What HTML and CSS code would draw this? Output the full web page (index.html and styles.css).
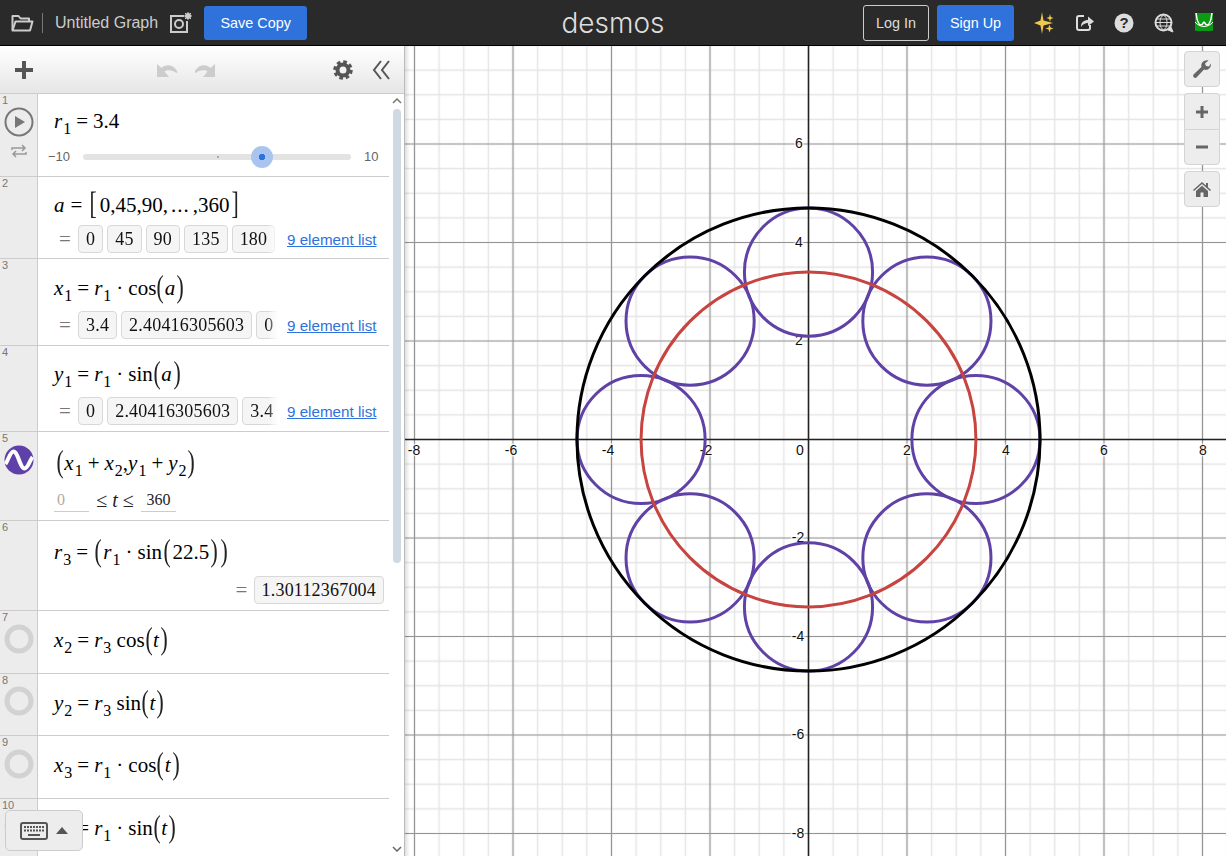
FILE: index.html
```html
<!DOCTYPE html>
<html lang="en">
<head>
    <meta charset="UTF-8">
    <title>Desmos | Graphing Calculator</title>
    <link rel="stylesheet" href="styles.css">
</head>
<body>
    <header class="topbar">
        <div class="topbar-left">
            <svg class="icon-folder" width="24" height="18" viewBox="0 0 24 18" fill="none" stroke="#ccc" stroke-width="2" stroke-linejoin="round"><path d="M2.5 16 V2 H8.5 L10.5 4.5 H19 V7.5"/><path d="M2.5 16.5 L5.5 7.5 H22.5 L20 16.5 Z"/></svg>
            <span class="topbar-divider"></span>
            <span class="graph-title">Untitled Graph</span>
            <svg class="icon-camera" width="24" height="22" viewBox="0 0 24 22" fill="none" stroke="#ccc" stroke-width="2"><path d="M15 4 H2 V20 H18 V9"/><circle cx="10" cy="12" r="4"/><circle cx="19" cy="4" r="3" fill="#ccc" stroke="none"/><path d="M19 0 V8 M15 4 H23 M16 1 L22 7 M22 1 L16 7" stroke-width="1"/></svg>
            <button class="btn-primary btn-save">Save Copy</button>
        </div>
        <div class="logo">desmos</div>
        <div class="topbar-right">
            <button class="btn-outline">Log In</button>
            <button class="btn-primary btn-signup">Sign Up</button>
            <svg class="top-icon icon-spark" width="22" height="24" viewBox="0 0 22 24" fill="#f0c74a"><path d="M9 1 L10.5 9.5 L20 12 L10.5 14.5 L9 23 L7.5 14.5 L1 12 L7.5 9.5 Z"/><path d="M17 3 L17.8 6 L20.5 7 L17.8 8 L17 11 L16.2 8 L13.5 7 L16.2 6 Z"/><path d="M16.5 13.5 L17.5 16.5 L20.5 17.5 L17.5 18.5 L16.5 21.5 L15.5 18.5 L12.5 17.5 L15.5 16.5 Z"/></svg>
            <svg class="top-icon icon-share" width="20" height="18" viewBox="0 0 20 18" fill="none" stroke="#ddd" stroke-width="2"><path d="M9 2 H4 Q2 2 2 4 V14 Q2 16 4 16 H13 Q15 16 15 14 V11"/><path d="M6 13 C6 8 9 6 13 6 V2.5 L19 7.500 L13 12 V9 C10 9 8 10 6 13 Z" fill="#ddd" stroke="none"/></svg>
            <svg class="top-icon icon-help" width="20" height="20" viewBox="0 0 20 20"><circle cx="10" cy="10" r="9.500" fill="#ddd"/><text x="10" y="15" text-anchor="middle" class="help-mark">?</text></svg>
            <svg class="top-icon icon-globe" width="20" height="20" viewBox="0 0 20 20" fill="none" stroke="#ddd"><circle cx="9.500" cy="9.500" r="8" stroke-width="2"/><path d="M19 19 L14 17 L17 14 Z" fill="#ddd"/><ellipse cx="9.500" cy="9.500" rx="3.500" ry="7"/><path d="M2 9.500 H17 M3 6 H16 M3 13 H16"/></svg>
            <svg class="top-icon icon-avatar" width="18" height="18" viewBox="0 0 18 18" fill="none"><rect width="18" height="18" rx="1" fill="#0b9a14"/><path d="M1 0 C2 8 4 12 6 12 C8 12 8 9 9 9 C10 9 10 12 12 12 C14 12 16 8 17 0" stroke="#fff" stroke-width="1.500"/><path d="M0 9 C5 15 13 15 18 9" stroke="#fff"/></svg>
        </div>
    </header>

    <main class="workspace">
        <section class="panel">
            <div class="panel-header">
                <svg class="icon-add" width="18" height="18" viewBox="0 0 18 18"><path d="M7 0 H11 V7 H18 V11 H11 V18 H7 V11 H0 V7 H7 Z" fill="#555"/></svg>
                <div class="history">
                    <svg width="22" height="16" viewBox="0 0 22 16"><path d="M1 15 V2 L5.500 6 C10 2 17 2 21.500 10 L20.500 11 C16 7.500 11 7.500 8.500 9.500 L13 15 Z" fill="#ccc"/></svg>
                    <svg width="22" height="16" viewBox="0 0 22 16"><path d="M21 15 V2 L16.500 6 C12 2 5 2 .5 10 L1.500 11 C6 7.500 11 7.500 13.500 9.500 L9 15 Z" fill="#ccc"/></svg>
                </div>
                <svg class="icon-gear" width="20" height="20" viewBox="0 0 20 20" fill="none" stroke="#555"><circle cx="10" cy="10" r="5.500" stroke-width="4"/><circle cx="10" cy="10" r="8" stroke-width="3.500" stroke-dasharray="3.500 2.780"/></svg>
                <svg class="icon-collapse" width="18" height="20" viewBox="0 0 18 20" fill="none" stroke="#555" stroke-width="2"><path d="M9 1 L2 10 L9 19"/><path d="M17 1 L10 10 L17 19"/></svg>
            </div>
            <div class="panel-body">
                <div class="expr-list">
                    <div class="expr row-1">
                        <div class="gutter">
                            <span class="index">1</span>
                            <svg class="gutter-icon" width="30" height="30" viewBox="0 0 30 30"><circle cx="15" cy="15" r="13.500" fill="none" stroke="#777" stroke-width="2"/><path d="M11 9 L21 15 L11 21 Z" fill="#777"/></svg>
                            <svg class="icon-loop" width="16" height="14" viewBox="0 0 16 14" fill="none" stroke="#999" stroke-width="1.500"><path d="M1 6 V4 H13 M11 1 L14 4 L11 7"/><path d="M15 8 V10 H3 M5 7 L2 10 L5 13"/></svg>
                        </div>
                        <div class="expr-body">
                            <div class="math"><i>r</i><sub>1</sub><span class="op">=</span>3.4</div>
                            <div class="slider">
                                <span class="slider-min">−10</span>
                                <div class="track"><span class="track-tick"></span><span class="thumb"></span></div>
                                <span class="slider-max">10</span>
                            </div>
                        </div>
                    </div>

                    <div class="expr row-2">
                        <div class="gutter"><span class="index">2</span></div>
                        <div class="expr-body">
                            <div class="math"><i>a</i><span class="op">=</span><span class="paren bracket">[</span>0,45,90,<span class="dots">...</span>,360<span class="paren bracket">]</span></div>
                            <div class="values">
                                <span class="equals">=</span>
                                <div class="chips">
                                    <span class="chip">0</span><span class="chip">45</span><span class="chip">90</span><span class="chip">135</span><span class="chip">180</span>
                                </div>
                                <a class="list-link">9 element list</a>
                            </div>
                        </div>
                    </div>

                    <div class="expr row-3">
                        <div class="gutter"><span class="index">3</span></div>
                        <div class="expr-body">
                            <div class="math"><i>x</i><sub>1</sub><span class="op">=</span><i>r</i><sub>1</sub><span class="op">·</span>cos<span class="paren">(</span><i>a</i><span class="paren">)</span></div>
                            <div class="values">
                                <span class="equals">=</span>
                                <div class="chips">
                                    <span class="chip">3.4</span><span class="chip">2.40416305603</span><span class="chip">0</span>
                                </div>
                                <a class="list-link">9 element list</a>
                            </div>
                        </div>
                    </div>

                    <div class="expr row-4">
                        <div class="gutter"><span class="index">4</span></div>
                        <div class="expr-body">
                            <div class="math"><i>y</i><sub>1</sub><span class="op">=</span><i>r</i><sub>1</sub><span class="op">·</span>sin<span class="paren">(</span><i>a</i><span class="paren">)</span></div>
                            <div class="values">
                                <span class="equals">=</span>
                                <div class="chips">
                                    <span class="chip">0</span><span class="chip">2.40416305603</span><span class="chip">3.4</span>
                                </div>
                                <a class="list-link">9 element list</a>
                            </div>
                        </div>
                    </div>

                    <div class="expr row-5">
                        <div class="gutter">
                            <span class="index">5</span>
                            <svg class="gutter-icon" width="30" height="30" viewBox="0 0 30 30"><circle cx="15" cy="15" r="14.500" fill="#5f3fa8"/><path d="M1.500 19 C4 16 6 6.500 9.500 6.500 C14 6.500 16 23.500 20.500 23.500 C24 23.500 26 15 28.500 12" fill="none" stroke="#fff" stroke-width="4"/></svg>
                        </div>
                        <div class="expr-body">
                            <div class="math math-indent"><span class="paren">(</span><i>x</i><sub>1</sub><span class="op">+</span><i>x</i><sub>2</sub>,<i>y</i><sub>1</sub><span class="op">+</span><i>y</i><sub>2</sub><span class="paren">)</span></div>
                            <div class="domain">
                                <span class="domain-input domain-empty">0</span>
                                <span class="domain-label">≤ <i>t</i> ≤</span>
                                <span class="domain-input">360</span>
                            </div>
                        </div>
                    </div>

                    <div class="expr row-6">
                        <div class="gutter"><span class="index">6</span></div>
                        <div class="expr-body">
                            <div class="math"><i>r</i><sub>3</sub><span class="op">=</span><span class="paren">(</span><i>r</i><sub>1</sub><span class="op">·</span>sin<span class="paren">(</span>22.5<span class="paren">)</span><span class="paren">)</span></div>
                            <div class="values values-right">
                                <span class="equals">=</span>
                                <span class="chip">1.30112367004</span>
                            </div>
                        </div>
                    </div>

                    <div class="expr row-short">
                        <div class="gutter">
                            <span class="index">7</span>
                            <svg class="gutter-icon" width="30" height="30" viewBox="0 0 30 30"><circle cx="15" cy="15" r="12" fill="none" stroke="#d2d2d2" stroke-width="5"/></svg>
                        </div>
                        <div class="expr-body">
                            <div class="math"><i>x</i><sub>2</sub><span class="op">=</span><i>r</i><sub>3</sub> cos<span class="paren">(</span><i>t</i><span class="paren">)</span></div>
                        </div>
                    </div>

                    <div class="expr row-short">
                        <div class="gutter">
                            <span class="index">8</span>
                            <svg class="gutter-icon" width="30" height="30" viewBox="0 0 30 30"><circle cx="15" cy="15" r="12" fill="none" stroke="#d2d2d2" stroke-width="5"/></svg>
                        </div>
                        <div class="expr-body">
                            <div class="math"><i>y</i><sub>2</sub><span class="op">=</span><i>r</i><sub>3</sub> sin<span class="paren">(</span><i>t</i><span class="paren">)</span></div>
                        </div>
                    </div>

                    <div class="expr row-short">
                        <div class="gutter">
                            <span class="index">9</span>
                            <svg class="gutter-icon" width="30" height="30" viewBox="0 0 30 30"><circle cx="15" cy="15" r="12" fill="none" stroke="#d2d2d2" stroke-width="5"/></svg>
                        </div>
                        <div class="expr-body">
                            <div class="math"><i>x</i><sub>3</sub><span class="op">=</span><i>r</i><sub>1</sub><span class="op">·</span>cos<span class="paren">(</span><i>t</i><span class="paren">)</span></div>
                        </div>
                    </div>

                    <div class="expr row-short">
                        <div class="gutter">
                            <span class="index">10</span>
                            <svg class="gutter-icon" width="30" height="30" viewBox="0 0 30 30"><circle cx="15" cy="15" r="12" fill="none" stroke="#d2d2d2" stroke-width="5"/></svg>
                        </div>
                        <div class="expr-body">
                            <div class="math"><i>y</i><sub>3</sub><span class="op">=</span><i>r</i><sub>1</sub><span class="op">·</span>sin<span class="paren">(</span><i>t</i><span class="paren">)</span></div>
                        </div>
                    </div>
                </div>
                <div class="scrollbar">
                    <svg width="10" height="6" viewBox="0 0 10 6" fill="none" stroke="#777" stroke-width="1.500"><path d="M1 5 L5 1 L9 5"/></svg>
                    <span class="scroll-thumb"></span>
                    <svg class="scroll-down" width="10" height="6" viewBox="0 0 10 6" fill="none" stroke="#666" stroke-width="1.500"><path d="M1 1 L5 5 L9 1"/></svg>
                </div>
                <button class="keyboard-toggle">
                    <svg width="28" height="18" viewBox="0 0 28 18"><rect x="1" y="1" width="26" height="16" rx="2" fill="none" stroke="#555" stroke-width="2"/><path d="M4 5 H24 M4 8.500 H24" stroke="#555" stroke-width="2" stroke-dasharray="2 1"/><path d="M8 13 H20" stroke="#555" stroke-width="2"/></svg>
                    <svg width="12" height="7" viewBox="0 0 12 7"><path d="M0 7 L6 0 L12 7 Z" fill="#555"/></svg>
                </button>
            </div>
        </section>

        <section class="graph">
            <svg class="graph-canvas" viewBox="405 46 821 810">
                <defs>
                    <pattern id="minorGrid" patternUnits="userSpaceOnUse" x="796.1875" y="427.1875" width="24.625" height="24.625">
                        <path d="M12.3125 0 V24.625 M0 12.3125 H24.625" stroke="#000" stroke-opacity=".1" stroke-width="1.400"/>
                    </pattern>
                    <pattern id="majorGrid" patternUnits="userSpaceOnUse" x="759.25" y="390.25" width="98.5" height="98.5">
                        <path d="M49.25 0 V98.5 M0 49.25 H98.5" stroke="#000" stroke-opacity=".35" stroke-width="1.200"/>
                    </pattern>
                </defs>
                <rect x="405" y="46" width="821" height="810" fill="#fff"/>
                <rect x="405" y="46" width="821" height="810" fill="url(#minorGrid)"/>
                <rect x="405" y="46" width="821" height="810" fill="url(#majorGrid)"/>
                <path class="axis" d="M808.5 46 V856 M405 439.500 H1226"/>
                <g class="tick-labels">
                    <text x="414" y="455">-8</text>
                    <text x="511" y="455">-6</text>
                    <text x="608" y="455">-4</text>
                    <text x="706" y="455">-2</text>
                    <text x="907" y="455">2</text>
                    <text x="1006" y="455">4</text>
                    <text x="1104" y="455">6</text>
                    <text x="1203" y="455">8</text>
                    <text x="800" y="455">0</text>
                    <text x="799" y="148">6</text>
                    <text x="799" y="247">4</text>
                    <text x="799" y="345">2</text>
                    <text x="798" y="542">-2</text>
                    <text x="798" y="641">-4</text>
                    <text x="798" y="739">-6</text>
                    <text x="798" y="838">-8</text>
                </g>
                <g class="curve curve-purple">
                    <circle cx="975.95" cy="439.5" r="64.08"/>
                    <circle cx="926.9" cy="321.1" r="64.08"/>
                    <circle cx="808.5" cy="272.05" r="64.08"/>
                    <circle cx="690.1" cy="321.1" r="64.08"/>
                    <circle cx="641.05" cy="439.5" r="64.08"/>
                    <circle cx="690.1" cy="557.9" r="64.08"/>
                    <circle cx="808.5" cy="606.95" r="64.08"/>
                    <circle cx="926.9" cy="557.9" r="64.08"/>
                </g>
                <circle class="curve curve-red" cx="808.5" cy="439.5" r="167.45"/>
                <circle class="curve curve-black" cx="808.5" cy="439.5" r="231.53"/>
            </svg>
            <span class="graph-shadow"></span>
            <div class="graph-controls">
                <button class="ctl">
                    <svg width="20" height="20" viewBox="0 0 20 20"><path d="M1.500 15.500 L9.500 8 C8.500 4 12 .5 16.500 1.500 L13 4.500 L14 7 L17 7.500 L19 4.500 C19.500 9 15.500 12 12 10.500 L4.500 18.500 Q3 19.500 1.500 18 Q.8 16.500 1.500 15.500 Z" fill="#666"/></svg>
                </button>
                <div class="ctl-group">
                    <button class="ctl ctl-top">
                        <svg width="14" height="14" viewBox="0 0 14 14"><path d="M5.500 1 H8.500 V5.500 H13 V8.500 H8.500 V13 H5.500 V8.500 H1 V5.500 H5.500 Z" fill="#666"/></svg>
                    </button>
                    <button class="ctl ctl-bottom">
                        <svg width="14" height="14" viewBox="0 0 14 14"><rect x="1" y="5.500" width="12" height="3" fill="#666"/></svg>
                    </button>
                </div>
                <button class="ctl">
                    <svg width="18" height="16" viewBox="0 0 18 16"><path d="M9 1 L13 4.500 V2 H15 V6.300 L18 9 L17 10 L9 3 L1 10 L0 9 Z M3 10 L9 4.800 L15 10 V16 H10.500 V11.500 H7.500 V16 H3 Z" fill="#666"/></svg>
                </button>
            </div>
        </section>
    </main>
</body>
</html>
```

FILE: styles.css
```css
* {
    box-sizing: border-box;
}

html, body {
    height: 100%;
}

body {
    margin: 0;
    overflow: hidden;
    display: flex;
    flex-direction: column;
    font-family: "Liberation Sans", Arial, sans-serif;
    background: #fff;
}

button {
    font-family: inherit;
    cursor: pointer;
}

svg {
    flex: none;
}

/* Top bar */
.topbar {
    height: 46px;
    flex: none;
    display: grid;
    grid-template-columns: 1fr auto 1fr;
    align-items: center;
    background: #2a2a2a;
    border-bottom: 1px solid #000;
}

.topbar-left,
.topbar-right {
    display: flex;
    align-items: center;
}

.topbar-left {
    padding-left: 10px;
}

.topbar-right {
    justify-content: flex-end;
}

.topbar-divider {
    width: 1px;
    height: 20px;
    margin: 0 12px 0 8px;
    background: #777;
}

.graph-title {
    font-size: 16px;
    color: #ccc;
}

.icon-camera {
    margin-left: 11px;
}

.btn-primary,
.btn-outline {
    height: 36px;
    font-size: 14.4px;
    border-radius: 3px;
}

.btn-primary {
    color: #fff;
    background: #2f72dc;
    border: none;
}

.btn-save {
    width: 103px;
    height: 34px;
    margin-left: 11px;
}

.btn-outline {
    width: 66px;
    color: #ddd;
    background: transparent;
    border: 1px solid #ccc;
}

.btn-signup {
    width: 77px;
    margin-left: 8px;
}

.logo {
    font-family: Inter, Lato, sans-serif;
    font-weight: 300;
    font-size: 28px;
    line-height: 44px;
    color: #ddd;
}

.icon-spark {
    margin-left: 19px;
}

.icon-share {
    margin-left: 20px;
}

.icon-help {
    margin-left: 19px;
}

.icon-globe {
    margin-left: 20px;
}

.icon-avatar {
    margin: -2px 13px 0 21px;
}

.help-mark {
    font-size: 15px;
    font-weight: bold;
    fill: #2a2a2a;
}

/* Layout below the bar */
.workspace {
    flex: 1;
    min-height: 0;
    display: flex;
}

.panel {
    width: 405px;
    flex: none;
    display: flex;
    flex-direction: column;
    border-right: 1px solid #bbb;
}

.panel-header {
    height: 48px;
    flex: none;
    display: flex;
    align-items: center;
    padding-left: 15px;
    background: linear-gradient(#fff, #e6e6e6);
    border-bottom: 1px solid #ccc;
}

.history {
    display: flex;
    gap: 16px;
    margin-left: 123px;
}

.icon-gear {
    margin-left: 117px;
}

.icon-collapse {
    margin-left: 19px;
}

.panel-body {
    position: relative;
    flex: 1;
    min-height: 0;
    display: flex;
}

/* Expression list */
.expr-list {
    width: 389px;
    flex: none;
    overflow: hidden;
    background: linear-gradient(90deg, #ececec 37px, #fff 37px);
}

.expr {
    position: relative;
    display: flex;
    border-bottom: 1px solid #ccc;
}

.row-1 { height: 83px; }
.row-2 { height: 82px; }
.row-3 { height: 87px; }
.row-4 { height: 86px; }
.row-5 { height: 89px; }
.row-6 { height: 90px; }
.row-short { height: 62.5px; }

.gutter {
    width: 38px;
    flex: none;
    display: flex;
    flex-direction: column;
    background: #ececec;
    border-right: 1px solid #ccc;
}

.index {
    height: 12.5px;
    padding-left: 2px;
    font-size: 11px;
    line-height: 12px;
    color: #777;
}

.gutter-icon {
    margin-left: 3.5px;
}

.icon-loop {
    margin: 7px 0 0 11px;
}

.expr-body {
    flex: 1;
    min-width: 0;
    padding: 8px 0 0 16px;
}

.row-1 .expr-body { padding-top: 7px; }
.row-3 .expr-body,
.row-short .expr-body { padding-top: 9px; }
.row-5 .expr-body { padding-top: 7px; }
.row-6 .expr-body { padding-top: 11px; }

.math {
    height: 40px;
    font-family: "Liberation Serif", "Times New Roman", serif;
    font-size: 21px;
    line-height: 40px;
    white-space: nowrap;
    color: #000;
}

.math i {
    padding-right: 1px;
}

.math sub {
    font-size: 16px;
    line-height: 0;
    vertical-align: -6px;
}

.math-indent {
    padding-left: 2px;
    margin-top: 4px;
}

.op {
    margin: 0 5px;
}

.dots {
    margin: 0 3px;
    letter-spacing: 1px;
}

.paren {
    display: inline-block;
    font-size: 31px;
    line-height: 0;
    vertical-align: -2px;
    margin: 0 -1px;
    color: #222;
    transform: scaleX(.7);
}

.bracket {
    margin: 0 1px;
}

.row-6 .paren {
    margin: 0;
}

.expr-close {
    position: absolute;
    top: 8px;
    right: 8px;
    width: 18px;
    height: 18px;
}

.expr-close::before,
.expr-close::after {
    content: '';
    position: absolute;
    left: -2px;
    top: 7px;
    width: 22px;
    height: 4.5px;
    background: #ccc;
    transform: rotate(45deg);
}

.expr-close::after {
    transform: rotate(-45deg);
}

/* Slider under r1 */
.slider {
    display: flex;
    align-items: center;
    margin: 8px 0 0 -6px;
    font-size: 13px;
    color: #666;
}

.slider-min {
    width: 35px;
}

.track {
    position: relative;
    width: 268px;
    height: 6px;
    background: #e3e3e3;
    border-radius: 3px;
}

.track-tick {
    position: absolute;
    left: 134px;
    top: 2px;
    width: 2px;
    height: 2px;
    background: #aaa;
}

.thumb {
    position: absolute;
    left: 168px;
    top: -8px;
    width: 22px;
    height: 22px;
    border-radius: 50%;
    background: radial-gradient(circle, #2f72dc 3px, #a9c4ef 3.5px);
}

.slider-max {
    margin-left: 13px;
}

/* Evaluated values */
.values {
    display: flex;
    align-items: center;
}

.row-3 .values,
.row-4 .values {
    margin-top: 3px;
}

.values-right {
    justify-content: flex-end;
    margin: 4px 5px 0 0;
}

.equals {
    width: 24px;
    padding-left: 5px;
    font-family: "Liberation Serif", serif;
    font-size: 21px;
    line-height: 28px;
    color: #777;
}

.values-right .equals {
    width: 18px;
    padding-left: 0;
}

.chips {
    width: 200px;
    display: flex;
    gap: 4px;
    overflow: hidden;
    -webkit-mask-image: linear-gradient(90deg, #000 190px, transparent 200px);
    mask-image: linear-gradient(90deg, #000 190px, transparent 200px);
}

.chip {
    flex: none;
    height: 28px;
    padding: 0 7px;
    font-family: "Liberation Serif", serif;
    font-size: 18px;
    line-height: 26px;
    letter-spacing: .2px;
    color: #111;
    background: #f5f5f5;
    border: 1px solid #d8d8d8;
    border-radius: 4px;
}

.list-link {
    margin-left: 9px;
    font-size: 15.2px;
    color: #2f72dc;
    text-decoration: underline;
    white-space: nowrap;
}

/* Parametric domain */
.domain {
    display: flex;
    align-items: center;
    margin-top: 5px;
    font-family: "Liberation Serif", serif;
    font-size: 20px;
    color: #222;
}

.domain-input {
    width: 35px;
    height: 24px;
    text-align: center;
    font-size: 16px;
    line-height: 24px;
    border-bottom: 1px solid #ccc;
}

.domain-empty {
    text-align: left;
    padding-left: 3px;
    color: #b5a9a0;
}

.domain-label {
    width: 52px;
    text-align: center;
}

/* Scrollbar */
.scrollbar {
    position: relative;
    width: 15px;
    flex: none;
    display: flex;
    flex-direction: column;
    align-items: center;
    padding-top: 4px;
    background: #fff;
}

.scroll-thumb {
    width: 8px;
    height: 454px;
    margin: 5px 0 0 1px;
    background: #cfd9e3;
    border-radius: 4px;
}

.scroll-down {
    margin-top: auto;
    margin-bottom: 4px;
}

.keyboard-toggle {
    position: absolute;
    left: 5px;
    bottom: 5px;
    width: 78px;
    height: 41px;
    display: flex;
    align-items: center;
    gap: 8px;
    padding: 0 0 0 14px;
    background: #ededed;
    border: 1px solid #ccc;
    border-radius: 5px;
}

/* Graph */
.graph {
    position: relative;
    flex: 1;
    min-width: 0;
    overflow: hidden;
}

.graph-canvas {
    display: block;
    width: 100%;
    height: 100%;
}

.axis {
    fill: none;
    stroke: #222;
    stroke-width: 1.5;
}

.tick-labels text {
    font-size: 14px;
    text-anchor: middle;
    fill: #111;
    stroke: #fff;
    stroke-width: 3px;
    stroke-opacity: .7;
    paint-order: stroke;
}

.curve,
.curve circle {
    fill: none;
    stroke-width: 3;
}

.curve-purple { stroke: #6042a6; }
.curve-red { stroke: #c74440; }
.curve-black { stroke: #000; }

.graph-shadow {
    position: absolute;
    left: 0;
    top: 0;
    bottom: 0;
    width: 5px;
    background: linear-gradient(90deg, rgba(0,0,0,.12), rgba(0,0,0,0));
}

.graph-controls {
    position: absolute;
    top: 5px;
    right: 6px;
    display: flex;
    flex-direction: column;
    gap: 6px;
}

.ctl {
    width: 36px;
    height: 36px;
    display: flex;
    align-items: center;
    justify-content: center;
    padding: 0;
    background: #ededed;
    border: 1px solid #d4d4d4;
    border-radius: 4px;
}

.ctl-group {
    display: flex;
    flex-direction: column;
}

.ctl-top {
    border-radius: 4px 4px 0 0;
    border-bottom: none;
}

.ctl-bottom {
    border-radius: 0 0 4px 4px;
}
```
